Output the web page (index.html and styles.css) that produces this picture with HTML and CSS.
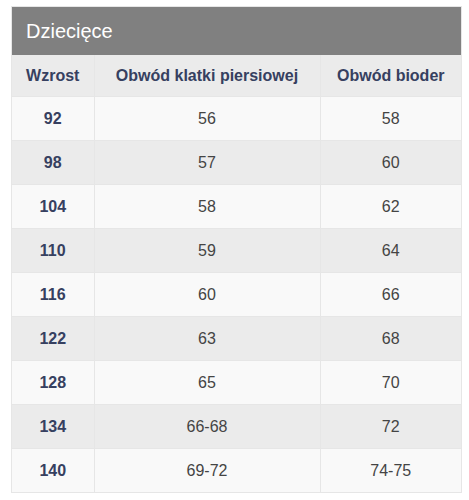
FILE: index.html
```html
<!DOCTYPE html>
<html>
<head>
<meta charset="utf-8">
<link rel="stylesheet" href="styles.css">
</head>
<body>
<div class="wrap">
  <div class="title">Dziecięce</div>
  <table class="sizes">
    <colgroup>
      <col class="c1"><col class="c2"><col class="c3">
    </colgroup>
    <thead>
      <tr><th>Wzrost</th><th>Obwód klatki piersiowej</th><th>Obwód bioder</th></tr>
    </thead>
    <tbody>
      <tr><td class="h">92</td><td>56</td><td>58</td></tr>
      <tr><td class="h">98</td><td>57</td><td>60</td></tr>
      <tr><td class="h">104</td><td>58</td><td>62</td></tr>
      <tr><td class="h">110</td><td>59</td><td>64</td></tr>
      <tr><td class="h">116</td><td>60</td><td>66</td></tr>
      <tr><td class="h">122</td><td>63</td><td>68</td></tr>
      <tr><td class="h">128</td><td>65</td><td>70</td></tr>
      <tr><td class="h">134</td><td>66-68</td><td>72</td></tr>
      <tr><td class="h">140</td><td>69-72</td><td>74-75</td></tr>
    </tbody>
  </table>
</div>
</body>
</html>
```
FILE: styles.css
```css
html, body {
  margin: 0;
  padding: 0;
  background: #ffffff;
}
body {
  font-family: "Liberation Sans", Arial, sans-serif;
}
.wrap {
  margin: 6px 0 0 11px;
  width: 451px;
  border: 1px solid #e6e6e6;
  box-sizing: border-box;
}
.title {
  background: #808080;
  color: #ffffff;
  font-size: 20px;
  height: 48px;
  line-height: 48px;
  padding-left: 14px;
}
.sizes {
  width: 100%;
  border-collapse: collapse;
  table-layout: fixed;
}
.c1 { width: 82px; }
.c2 { width: 226px; }
.sizes th, .sizes td {
  text-align: center;
  border-right: 1px solid #e6e6e6;
  border-bottom: 1px solid #e6e6e6;
  padding: 0;
}
.sizes th:last-child, .sizes td:last-child { border-right: none; }
.sizes tr:last-child td { border-bottom: none; }
.sizes th {
  background: #ebebeb;
  color: #364060;
  font-weight: bold;
  font-size: 16px;
  height: 41px;
}
.sizes td {
  color: #444444;
  font-size: 16px;
  height: 43px;
}
.sizes td.h {
  color: #364060;
  font-weight: bold;
  font-size: 16px;
}
.sizes tbody tr:nth-child(odd) td { background: #f9f9f9; }
.sizes tbody tr:nth-child(even) td { background: #ebebeb; }
```
